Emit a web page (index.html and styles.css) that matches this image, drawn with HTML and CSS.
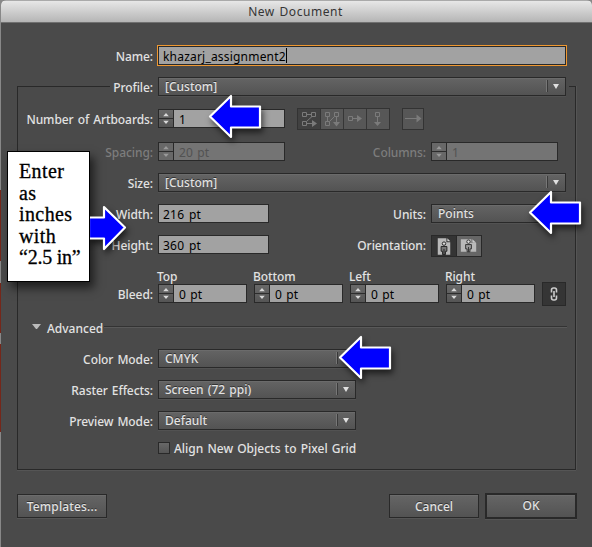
FILE: index.html
```html
<!DOCTYPE html>
<html lang="en">
<head>
<meta charset="utf-8">
<title>New Document</title>
<link rel="stylesheet" href="styles.css">
</head>
<body>
<svg class="defs" width="0" height="0">
  <symbol id="arrow" viewBox="0 0 56 48"><path d="M3 23.500L24 3V13.500H53V34.500H24V44Z" fill="#00f" stroke="#fff" stroke-width="2.200" stroke-linejoin="round"/></symbol>
  <symbol id="step" viewBox="0 0 15 17"><path d="M0 8.500H15" stroke="#292929"/><path d="M4.500 6L7.500 2.500L10.500 6ZM4.500 11L7.500 14.500L10.500 11Z" fill="currentColor"/></symbol>
</svg>
<main class="dialog">
  <header class="titlebar">New Document</header>
  <div class="row name-row"><label>Name:</label><div class="focus"><div class="field name">khazarj_assignment2<i class="caret"></i></div></div></div>
  <section class="panel">
    <div class="row profile-row"><label>Profile:</label><div class="select full"><span>[Custom]</span><b></b></div></div>
    <div class="row count-row"><label>Number of Artboards:</label>
      <div class="stepper wide"><svg><use href="#step"/></svg><span>1</span></div>
      <div class="tools">
        <svg class="on" viewBox="0 0 22 20"><path d="M4.500 3.500h4v4h-4zM13.500 3.500h4v4h-4zM4.500 12.500h4v4h-4zM9 5.500h4M14 7.500L8.500 12.500M9 14.500h6"/><path class="solid" d="M14 11l5 3.500-5 3.500z"/></svg>
        <svg viewBox="0 0 22 20"><path d="M4.500 3.500h4v4h-4zM13.500 3.500h4v4h-4zM4.500 12.500h4v4h-4zM6.500 8v4M8.500 12.500L13.500 7.500M15.500 8v6"/><path class="solid" d="M12 13h7l-3.500 4.500z"/></svg>
        <svg viewBox="0 0 22 20"><path d="M4.500 7.500h4v4h-4zM9 9.500h6"/><path class="solid" d="M13 6l5 3.500-5 3.500z"/></svg>
        <svg viewBox="0 0 22 20"><path d="M8.500 3.500h4v4h-4zM10.500 8v6"/><path class="solid" d="M7 13h7l-3.500 4z"/></svg>
      </div>
      <div class="tools single"><svg viewBox="0 0 20 20"><path d="M2 9.500h13"/><path class="solid" d="M13.500 5.500l5 4-5 4z"/></svg></div>
    </div>
    <div class="row spacing-row off"><label>Spacing:</label>
      <div class="stepper wide"><svg><use href="#step"/></svg><span>20 pt</span></div>
      <label class="second">Columns:</label>
      <div class="stepper wide"><svg><use href="#step"/></svg><span>1</span></div>
    </div>
    <div class="row size-row"><label>Size:</label><div class="select full"><span>[Custom]</span><b></b></div></div>
    <div class="row width-row"><label>Width:</label><div class="field dim">216 pt</div><label class="second">Units:</label><div class="select units"><span>Points</span><b></b></div></div>
    <div class="row height-row"><label>Height:</label><div class="field dim">360 pt</div><label class="second">Orientation:</label>
      <div class="orient">
        <svg class="on" viewBox="0 0 25 20"><path d="M6 2h9v4h4v13H6z" fill="#b9b9b9"/><path d="M16 2l3 3h-3z" fill="#d2d2d2"/><circle cx="12.500" cy="7.500" r="1.800" fill="#ddd" stroke="#222"/><path d="M9.500 15.500v-5h6v5h-1.500v3.500h-3v-3.500z" fill="#777" stroke="#222"/><path d="M12.500 13v6" stroke="#222"/></svg>
        <svg viewBox="0 0 25 20"><path d="M4 3h11v4h5v9H4z" fill="#b9b9b9"/><path d="M16 3l4 3.500h-4z" fill="#ccc"/><circle cx="12" cy="5.500" r="1.800" fill="#ddd" stroke="#333"/><path d="M9 13v-4.500h6v4.500h-1.500v3h-3v-3z" fill="#999" stroke="#333"/><path d="M12 11v5" stroke="#333"/></svg>
      </div>
    </div>
    <div class="row bleed-row"><label>Bleed:</label>
      <div class="bleed"><em>Top</em><div class="stepper"><svg><use href="#step"/></svg><span>0 pt</span></div></div>
      <div class="bleed"><em>Bottom</em><div class="stepper"><svg><use href="#step"/></svg><span>0 pt</span></div></div>
      <div class="bleed"><em>Left</em><div class="stepper"><svg><use href="#step"/></svg><span>0 pt</span></div></div>
      <div class="bleed"><em>Right</em><div class="stepper"><svg><use href="#step"/></svg><span>0 pt</span></div></div>
      <div class="link"><svg viewBox="0 0 22 22"><path d="M8.500 9.500V7q0-2 2-2h1q2 0 2 2v2.500M8.500 12.500V15q0 2 2 2h1q2 0 2-2v-2.500M11 8v6" fill="none" stroke="#ccc" stroke-width="1.600"/></svg></div>
    </div>
    <div class="advanced"><i></i><span>Advanced</span><hr></div>
    <div class="row color-row"><label>Color Mode:</label><div class="select"><span>CMYK</span><b></b></div></div>
    <div class="row mode-row"><label>Raster Effects:</label><div class="select"><span>Screen (72 ppi)</span><b></b></div></div>
    <div class="row mode-row"><label>Preview Mode:</label><div class="select"><span>Default</span><b></b></div></div>
    <div class="check"><i></i><span>Align New Objects to Pixel Grid</span></div>
  </section>
  <footer><div class="button templates">Templates...</div><div class="button cancel">Cancel</div><div class="button ok">OK</div></footer>
</main>
<aside class="note">Enter<br>as<br>inches<br>with<br><span class="size">“2.5 in”</span></aside>
<svg class="arrow a1"><use href="#arrow"/></svg>
<svg class="arrow a2"><use href="#arrow"/></svg>
<svg class="arrow a3"><use href="#arrow"/></svg>
<svg class="arrow a4" viewBox="0 0 40 48"><path d="M0 13.500H15V3L36 23.500L15 45V34.500H0Z" fill="#00f" stroke="#fff" stroke-width="2.200" stroke-linejoin="round"/></svg>
</body>
</html>
```
FILE: styles.css
```css
* { box-sizing: border-box; }
body {
  margin: 0; width: 592px; height: 547px; overflow: hidden; position: relative; padding-left: 1px;
  background: linear-gradient(#888 190px, #75271a 190px 261px, #888 261px 283px, #75271a 283px 333px, #888 333px 344px, #75271a 344px 432px, #888 432px);
  font: 500 12px/19px "Noto Sans", sans-serif; color: #e2e2e2; letter-spacing: 0; word-spacing: 1px;
}
.defs { position: absolute; }
svg { display: block; }
.dialog { height: 547px; background: #4a4a4a; border-radius: 5px 5px 0 0; overflow: hidden; }
.titlebar { height: 23px; border-top: 1px solid #aaa; border-bottom: 1px solid #707070; background: linear-gradient(#e7e7e7, #b5b5b5); color: #353535; font-weight: 400; text-align: center; line-height: 22px; letter-spacing: .55px; padding-right: 2px; }
.row { display: flex; height: 19px; }
label { width: 135px; margin-right: 5px; text-align: right; line-height: 21px; letter-spacing: -.07px; white-space: nowrap; flex: none; }
.name-row { margin: 22px 0 0 17px; height: 21px; }
.name-row label { margin-right: 4px; line-height: 23px; }
.focus { width: 410px; border: 1px solid #ef9831; }
.field { height: 19px; border: 1px solid #292929; background: #a2a2a2; color: #000; padding-left: 4px; line-height: 20px; font-weight: 400; letter-spacing: .2px; white-space: nowrap; display: flex; }
.field.dim { word-spacing: 1.5px; }
.caret { width: 1px; height: 15px; margin-top: 1px; background: #000; }
.panel { margin: 20px 0 0 16px; width: 559px; height: 384px; border: 1px solid #292929; box-shadow: 0 1px #555, 1px 0 #555; }
.profile-row { margin: -10px 6px 0 92px; background: #4a4a4a; }
.profile-row label { width: 43px; }
.select { width: 198px; height: 19px; border: 1px solid #292929; background: linear-gradient(#646464, #535353); box-shadow: inset 0 1px #6b6b6b, 0 1px #525252; display: flex; justify-content: space-between; padding: 0 5px 0 6px; line-height: 17px; text-shadow: 0 -1px #333; white-space: nowrap; }
.select.full { width: 408px; }
.select.units { width: 135px; }
.select b { width: 14px; height: 12px; margin-top: 2px; border-left: 1px solid #777; box-shadow: inset 1px 0 #393939; position: relative; }
.select b::after { content: ""; position: absolute; left: 6px; top: 4px; border: 3.5px solid transparent; border-top: 5px solid #e0e0e0; border-bottom: 0; }
.stepper { width: 89px; height: 19px; border: 1px solid #292929; background: #a2a2a2; color: #000; display: flex; font-weight: 400; line-height: 20px; letter-spacing: .2px; word-spacing: .8px; }
.stepper.wide { width: 127px; }
.stepper svg { width: 15px; height: 17px; border-right: 1px solid #292929; background: linear-gradient(#696969, #555); color: #d8d8d8; flex: none; }
.stepper span { padding-left: 5px; }
.count-row { margin-top: 13px; }
.tools { height: 22px; display: flex; margin: -1px 0 0 12px; border: 1px solid #333; background: #575757; }
.tools svg { width: 23px; height: 20px; border-right: 1px solid #363636; fill: none; stroke: #7b7b7b; }
.tools svg:last-child { width: 22px; border: 0; }
.tools .on { background: #414141; }
.tools .solid { fill: #7b7b7b; stroke: none; }
.tools.single svg { width: 20px; }
.spacing-row { margin-top: 14px; }
.off { color: #7d7d7d; }
.off .stepper { background: #747474; color: #525252; }
.off .stepper svg { color: #999; background: #686868; }
.off .second { width: 136px; margin-left: 5px; }
.size-row { margin-top: 12px; }
.width-row, .height-row { margin-top: 12px; }
.dim { width: 111px; }
.width-row .second, .height-row .second { width: 157px; }
.orient { width: 51px; height: 22px; border: 1px solid #292929; display: flex; background: #666; }
.orient svg { width: 24px; height: 20px; }
.orient .on { width: 25px; background: #343434; border-right: 1px solid #292929; }
.bleed-row { margin-top: 14px; height: 35px; }
.bleed-row label { padding-top: 16px; }
.bleed { margin-right: 7px; }
.bleed em { display: block; height: 16px; line-height: 17px; font-style: normal; margin-left: -1px; letter-spacing: -.1px; }
.link { width: 24px; height: 24px; margin-top: 14px; border: 1px solid #292929; background: #353535; }
.advanced { display: flex; height: 17px; margin: 16px 8px 0 14px; line-height: 19px; }
.advanced i { border: 4.5px solid transparent; border-top: 5px solid #bbb; border-bottom: 0; height: 0; margin-top: 5px; width: 9px; }
.advanced span { margin-left: 6px; }
.advanced hr { flex: 1; margin: 7px 0 0 1px; height: 2px; border: 0; border-top: 1px solid #333; background: #595959; }
.color-row { margin-top: 13px; }
.mode-row { margin-top: 12px; }
.check { display: flex; margin: 12px 0 0 140px; line-height: 13px; }
.check i { width: 12px; height: 12px; border: 1px solid #292929; background: linear-gradient(#686868, #555); }
.check span { margin-left: 4px; }
footer { display: flex; align-items: center; margin: 23px 15px 0 16px; height: 26px; }
.button { width: 90px; height: 24px; border: 1px solid #292929; background: linear-gradient(#656565, #535353); box-shadow: inset 0 1px #6c6c6c, 0 1px #555; text-align: center; line-height: 23px; text-shadow: 0 -1px #333; }
.templates { letter-spacing: .15px; }
.cancel { margin: 0 6px 0 auto; }
.ok { width: 92px; height: 26px; border-width: 2px; line-height: 21px; }
.note { position: absolute; left: 7px; top: 151px; width: 83px; height: 131px; background: #fff; border: 1px solid #000; box-shadow: 4px 6px 9px #0009; color: #000; padding: 9px 0 0 11px; font: 20px/21.500px "Liberation Serif", serif; letter-spacing: .4px; word-spacing: 0; -webkit-text-stroke: .3px #000; white-space: nowrap; }
.size { letter-spacing: -.25px; word-spacing: 0; }
.arrow { position: absolute; width: 56px; height: 48px; overflow: visible; filter: drop-shadow(2px 4px 3px #0009); }
.a1 { left: 207px; top: 93px; }
.a2 { left: 527px; top: 189px; }
.a3 { left: 337px; top: 334px; }
.a4 { left: 89px; top: 204px; width: 40px; clip-path: inset(-5px -10px -15px 1px); }
```
